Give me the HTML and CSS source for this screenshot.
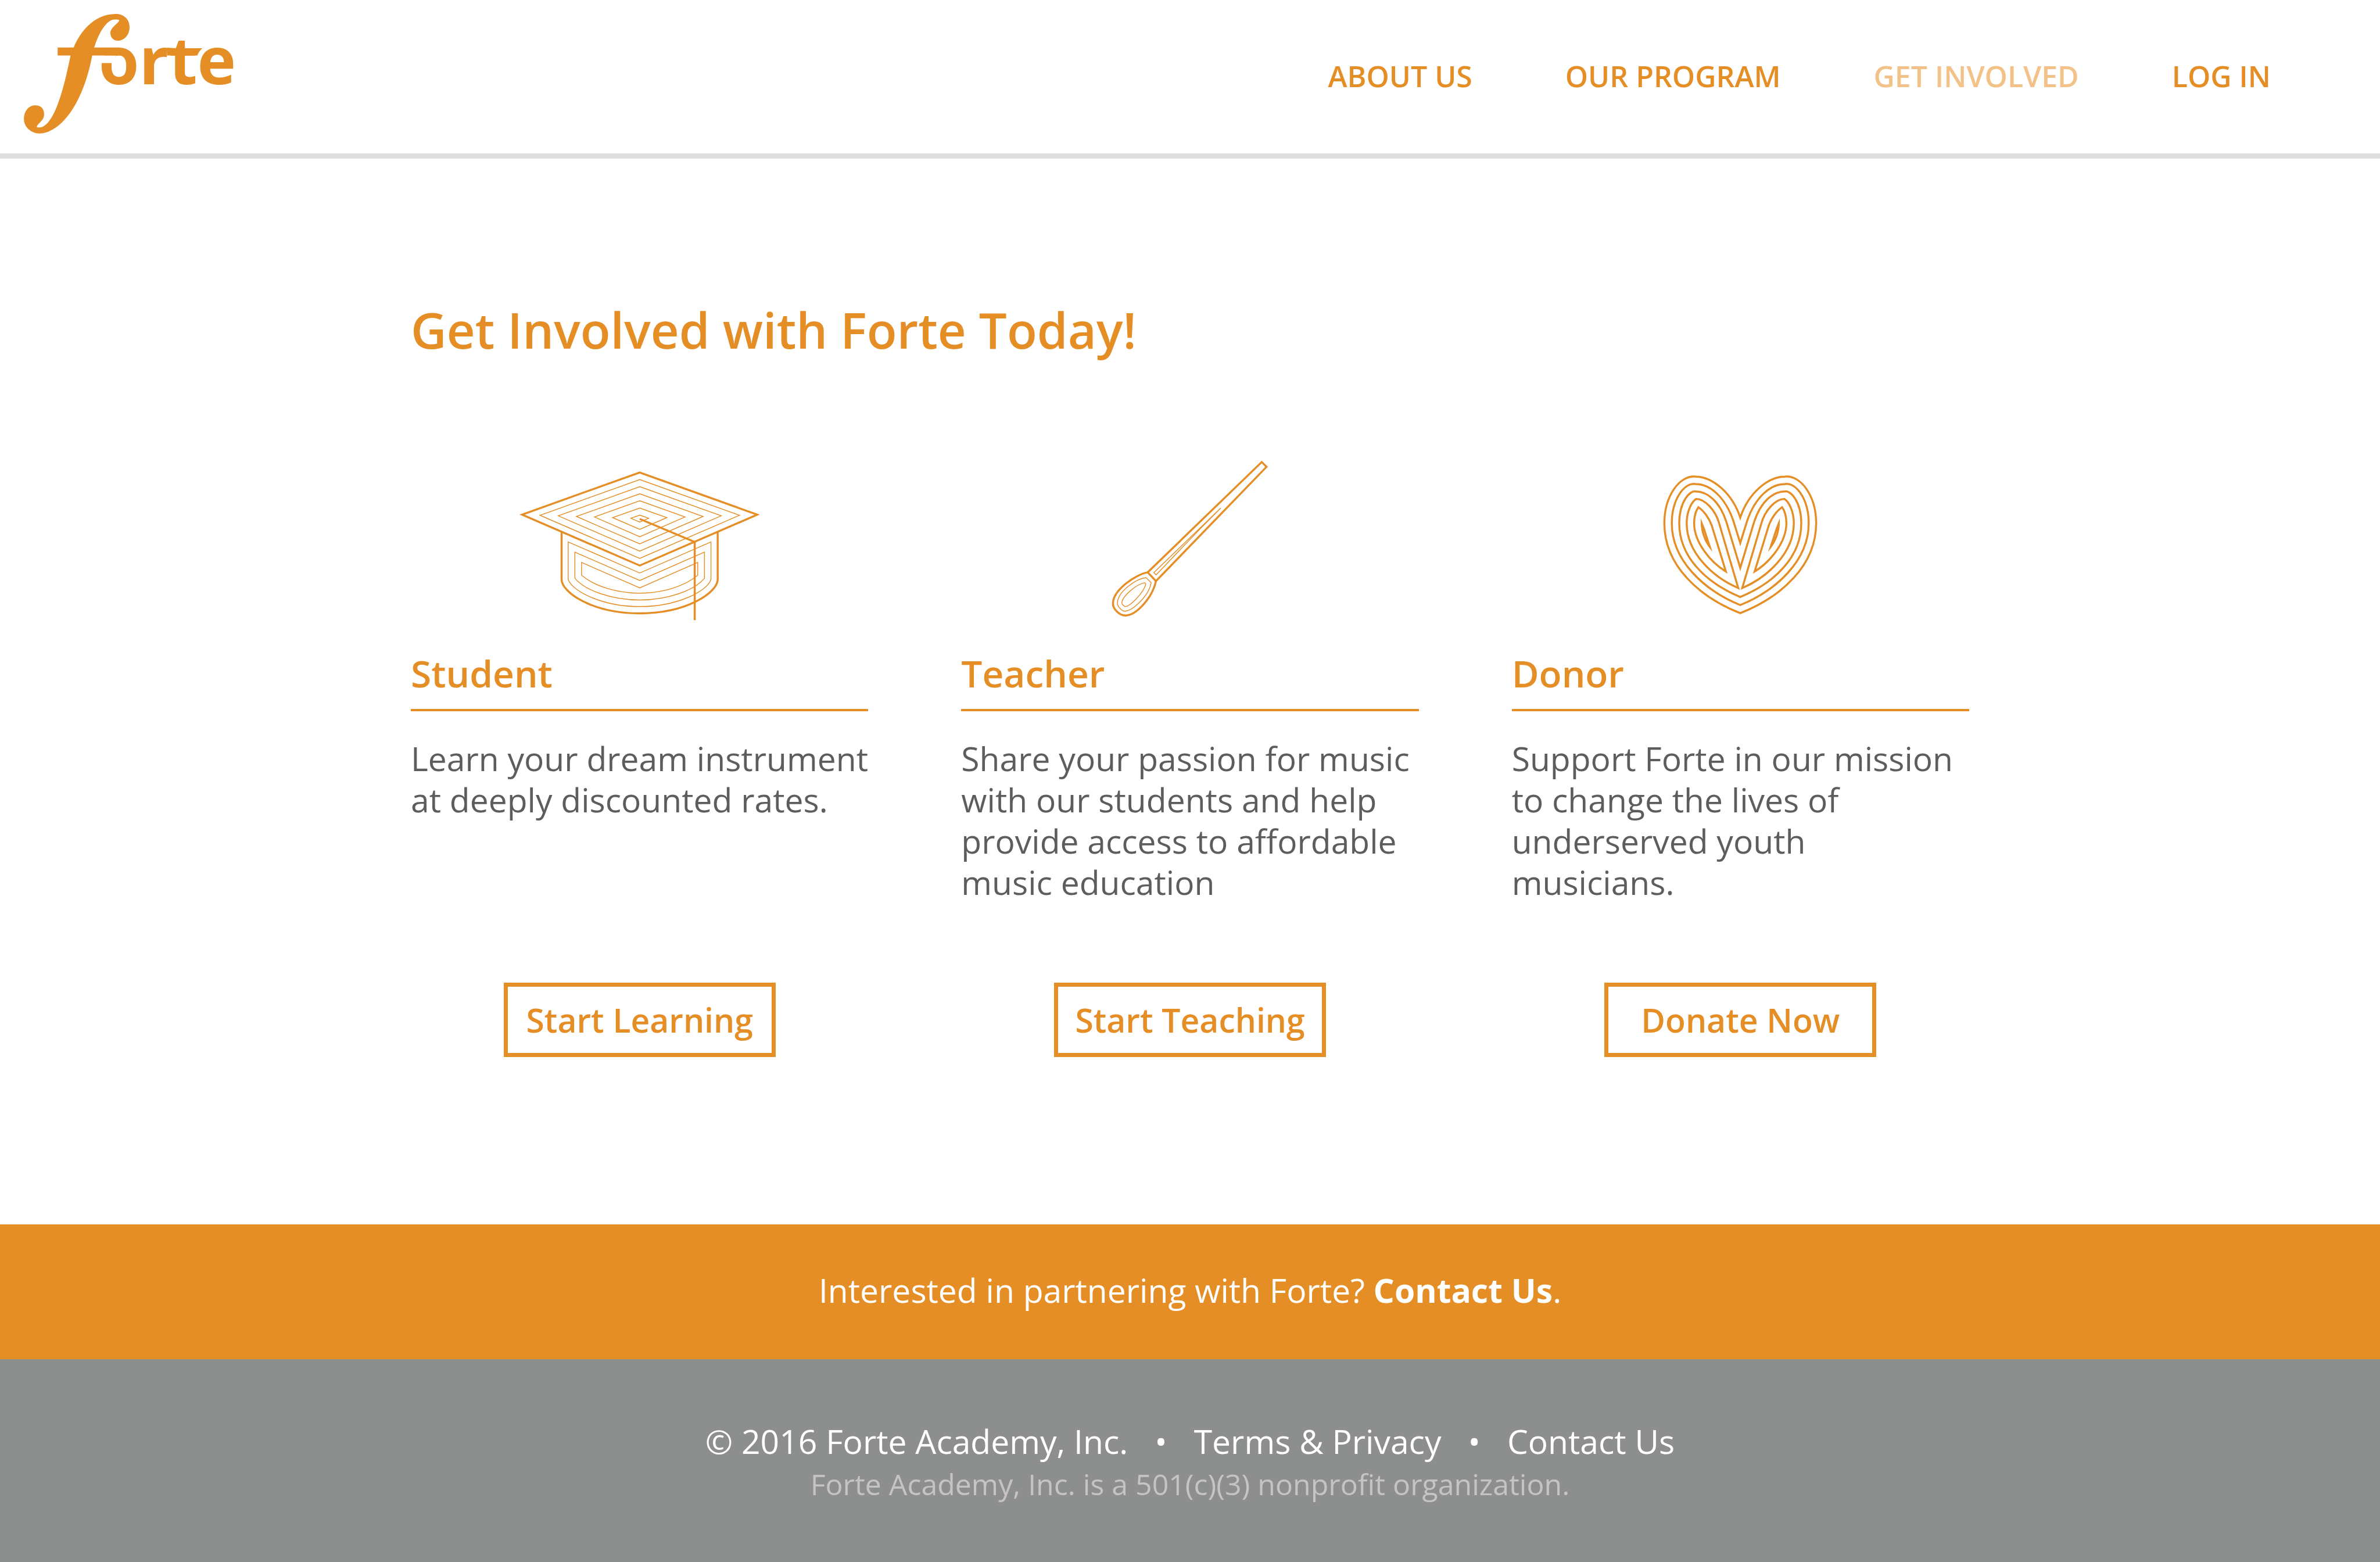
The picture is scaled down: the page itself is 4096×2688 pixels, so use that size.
FILE: index.html
```html
<!DOCTYPE html>
<html lang="en">
<head>
  <meta charset="utf-8">
  <title>Get Involved | Forte</title>
  <link rel="stylesheet" href="styles.css">
</head>
<body>
  <header class="site-header">
    <a class="logo" href="#" aria-label="Forte">
      <svg class="logo-art" viewBox="144 84 1271 724">
        <text class="logo-text" x="596" y="508">orte</text>
        <path class="logo-gap" d="M600 335H700V381H600Z"/>
        <path d="M445 287C478 205 560 84 700 84C752 84 783 120 783 163C783 210 752 246 711 246C685 246 667 225 667 200C667 180 680 168 690 157C705 142 720 130 720 124C720 117 705 117 695 117C640 117 595 205 569 287H722V335H557C530 480 480 610 410 700C355 770 290 807 240 807C185 807 144 765 144 720C144 675 170 637 213 637C245 637 266 655 266 690C266 722 245 733 230 752C220 765 218 771 235 771C325 771 385 540 426 335H348V287Z"/>
        <path d="M1010 288L1064 291H1223Q1200 312 1193 335H1010Z"/>
      </svg>
    </a>
    <nav class="site-nav">
      <a href="#">ABOUT US</a>
      <a href="#">OUR PROGRAM</a>
      <a class="is-current" href="#" aria-current="page">GET INVOLVED</a>
      <a href="#">LOG IN</a>
    </nav>
  </header>

  <main class="content">
    <h1>Get Involved with Forte Today!</h1>
    <div class="cards">
      <section class="card">
        <svg class="card-icon" viewBox="41 24 1456 984" preserveAspectRatio="none" aria-hidden="true">
          <g class="thick">
            <path d="M769 98L1470 353L769 661L67 353Z"/>
            <path d="M303 457V745C303 820 480 950 769 950C1058 950 1234 820 1234 745V457"/>
            <path d="M769 379L1097 518V991"/>
          </g>
          <g class="thin">
            <path d="M769 141L1364 357L769 618L174 357Z"/>
            <path d="M769 184L1255 360L769 574L283 360Z"/>
            <path d="M769 227L1147 364L769 530L391 364Z"/>
            <path d="M769 269L1039 367L769 487L499 367Z"/>
            <path d="M769 313L931 371L769 442L607 371Z"/>
            <path d="M769 356L822 375L769 398L716 375Z"/>
            <path d="M342 518L769 706L1194 518V745C1168 820 988 909 769 909C550 909 370 820 342 745Z"/>
            <path d="M382 580L769 751L1155 580V738C1098 810 938 869 769 869C600 869 440 810 382 738Z"/>
            <path d="M422 642L769 796L1115 642V720C1038 785 908 828 769 828C630 828 500 785 422 720Z"/>
          </g>
        </svg>
        <h2>Student</h2>
        <p>Learn your dream instrument at deeply discounted rates.</p>
        <button type="button">Start Learning</button>
      </section>

      <section class="card">
        <svg class="card-icon" viewBox="-137 84 1476 984" aria-hidden="true">
          <g class="thick">
            <path d="M1035 95L1064 124L395 815L345 762Z"/>
            <path d="M345 762C270 775 135 870 135 950C135 985 175 1023 210 1023C280 1023 375 910 395 815"/>
          </g>
          <g class="thin">
            <path d="M787 373L382 764L396 777L660 501Z"/>
            <path d="M335 794L366 825C355 900 255 997 205 997C190 997 162 968 162 950C162 880 270 803 335 794Z"/>
            <path d="M328 825L334 832C320 890 235 968 210 969C203 969 189 955 189 948C189 910 275 833 328 825Z"/>
          </g>
        </svg>
        <h2>Teacher</h2>
        <p>Share your passion for music with our students and help provide access to affordable music education</p>
        <button type="button">Start Teaching</button>
      </section>

      <section class="card">
        <svg class="card-icon" viewBox="-168 -6 1476 984" aria-hidden="true">
          <g class="thick">
            <path d="M570 341C520 190 400 93 300 93C200 83 111 215 111 375C111 630 320 820 570 919C820 820 1029 630 1029 375C1029 215 940 83 840 93C740 93 620 190 570 341Z"/>
            <path d="M570 495L528 360C480 220 390 138 300 138C225 128 156 240 156 375C156 600 350 780 570 870C790 780 984 600 984 375C984 240 915 128 840 138C750 138 660 220 612 360Z"/>
            <path d="M570 645L487 370C445 240 370 183 300 183C270 173 201 240 201 375C201 570 350 730 570 821C790 730 939 570 939 375C939 240 870 173 840 183C770 183 695 240 653 370Z"/>
            <path id="lobe-mid" d="M304 228C355 228 420 295 442 375L558 767C400 700 246 550 246 375C246 305 275 245 304 228Z"/>
            <path id="lobe-small" d="M317 278C350 300 382 345 398 390L483 667C390 610 291 490 291 375C291 330 305 295 317 278Z"/>
            <path id="lobe-core" d="M337 376L350 408L386 518C360 485 337 430 337 376Z"/>
            <g transform="translate(1140 0) scale(-1 1)">
              <use href="#lobe-mid"/>
              <use href="#lobe-small"/>
              <use href="#lobe-core"/>
            </g>
          </g>
        </svg>
        <h2>Donor</h2>
        <p>Support Forte in our mission to change the lives of underserved youth musicians.</p>
        <button type="button">Donate Now</button>
      </section>
    </div>
  </main>

  <aside class="partner">
    <p>Interested in partnering with Forte? <a href="#">Contact Us</a>.</p>
  </aside>

  <footer class="site-footer">
    <div class="footer-links">
      <span>© 2016 Forte Academy, Inc.</span>
      <span>•</span>
      <a href="#">Terms &amp; Privacy</a>
      <span>•</span>
      <a href="#">Contact Us</a>
    </div>
    <p class="legal">Forte Academy, Inc. is a 501(c)(3) nonprofit organization.</p>
  </footer>
</body>
</html>
```
FILE: styles.css
```css
* {
  box-sizing: border-box;
}

body {
  --orange: #e58e26;
  display: flex;
  flex-direction: column;
  min-height: 100vh;
  margin: 0;
  background: #fff;
  color: #5c5d5c;
  font-family: "Open Sans", sans-serif;
  font-size: 57px;
  line-height: 71px;
}

a {
  color: inherit;
  text-decoration: none;
}

h1,
h2,
p {
  margin: 0;
}

.site-header {
  display: flex;
  justify-content: space-between;
  align-items: center;
  padding: 24px 188px 34px 41px;
  border-bottom: 9px solid #dedede;
}

.logo,
.logo-art {
  display: block;
}

.logo-art {
  width: 362px;
  height: 206px;
  fill: var(--orange);
  overflow: visible;
}

.logo-text {
  font-size: 396px;
  font-weight: 700;
}

.logo-gap {
  fill: #fff;
}

.site-nav {
  display: flex;
  gap: 160px;
  padding-top: 8px;
  color: var(--orange);
  font-size: 50px;
  font-weight: 600;
}

.site-nav .is-current {
  color: #f2c289;
}

.content {
  width: 100%;
  max-width: 2682px;
  margin: 0 auto;
  padding: 236px 0 288px;
}

h1 {
  color: var(--orange);
  font-size: 85px;
  font-weight: 600;
  line-height: 116px;
}

.cards {
  display: grid;
  grid-template-columns: repeat(3, 1fr);
  gap: 160px;
  margin-top: 167px;
}

.card {
  display: flex;
  flex-direction: column;
}

.card-icon {
  align-self: center;
  width: 420px;
  height: 280px;
  fill: none;
  stroke: var(--orange);
  stroke-miterlimit: 12;
  overflow: visible;
}

.thick {
  stroke-width: 12px;
}

.thin {
  stroke-width: 5px;
}

h2 {
  margin-top: 43px;
  padding-bottom: 17px;
  border-bottom: 4px solid var(--orange);
  color: var(--orange);
  font-size: 64px;
  font-weight: 600;
  line-height: 88px;
}

.card p {
  margin: 46px 0 137px;
}

button {
  align-self: center;
  width: 468px;
  height: 128px;
  margin-top: auto;
  padding: 0;
  border: 7px solid var(--orange);
  background: #fff;
  color: var(--orange);
  font: 600 57px/71px "Open Sans", sans-serif;
}

.partner {
  padding: 78px 0 83px;
  background: var(--orange);
  color: #fff;
  text-align: center;
}

.partner a {
  font-weight: 700;
}

.site-footer {
  display: flex;
  flex: 1;
  flex-direction: column;
  align-items: center;
  padding-top: 106px;
  background: #8d8f8e;
  color: #fff;
}

.footer-links {
  display: flex;
  gap: 46px;
}

.legal {
  margin-top: 3px;
  color: #c8c3c3;
  font-size: 50px;
}
```
